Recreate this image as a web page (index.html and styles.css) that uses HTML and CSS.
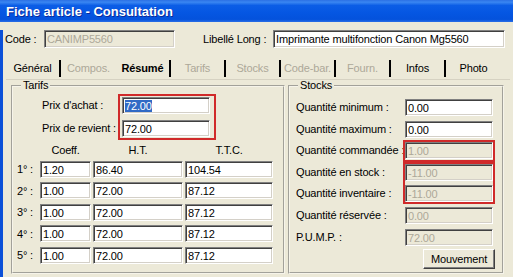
FILE: index.html
```html
<!DOCTYPE html>
<html lang="fr">
<head>
  <meta charset="UTF-8">
  <title>Fiche article - Consultation</title>
  <link rel="stylesheet" href="styles.css">
</head>
<body>
  <div class="window">
    <div class="titlebar">Fiche article - Consultation</div>

    <div class="client">
      <div class="top-row">
        <span class="code-label">Code :</span>
        <div class="field big disabled code-field">CANIMP5560</div>
        <span class="libelle-label">Libellé Long :</span>
        <div class="field big libelle-field">Imprimante multifonction Canon Mg5560</div>
      </div>

      <div class="tabs">
        <div class="tab sep">Général</div>
        <div class="tab off">Compos.</div>
        <div class="tab sep active">Résumé</div>
        <div class="tab sep off">Tarifs</div>
        <div class="tab sep off">Stocks</div>
        <div class="tab sep off">Code-bar.</div>
        <div class="tab sep off">Fourn.</div>
        <div class="tab sep">Infos</div>
        <div class="tab">Photo</div>
      </div>
      <div class="tab-line"></div>

      <div class="panels">
        <fieldset class="group tarifs">
          <legend>Tarifs</legend>
          <div class="prix">
            <div class="prix-labels">
              <span>Prix d'achat :</span>
              <span>Prix de revient :</span>
            </div>
            <div class="mark prix-mark">
              <div class="field"><span class="sel">72.00</span></div>
              <div class="field">72.00</div>
            </div>
          </div>

          <div class="niveaux">
            <span></span>
            <span class="head">Coeff.</span>
            <span class="head">H.T.</span>
            <span class="head">T.T.C.</span>

            <span class="lbl">1° :</span>
            <div class="field">1.20</div>
            <div class="field">86.40</div>
            <div class="field">104.54</div>

            <span class="lbl">2° :</span>
            <div class="field">1.00</div>
            <div class="field">72.00</div>
            <div class="field">87.12</div>

            <span class="lbl">3° :</span>
            <div class="field">1.00</div>
            <div class="field">72.00</div>
            <div class="field">87.12</div>

            <span class="lbl">4° :</span>
            <div class="field">1.00</div>
            <div class="field">72.00</div>
            <div class="field">87.12</div>

            <span class="lbl">5° :</span>
            <div class="field">1.00</div>
            <div class="field">72.00</div>
            <div class="field">87.12</div>
          </div>
        </fieldset>

        <fieldset class="group stocks">
          <legend>Stocks</legend>
          <div class="qtes">
            <div class="qte-labels">
              <span>Quantité minimum :</span>
              <span>Quantité maximum :</span>
              <span>Quantité commandée :</span>
              <span>Quantité en stock :</span>
              <span>Quantité inventaire :</span>
              <span>Quantité réservée :</span>
              <span>P.U.M.P. :</span>
            </div>
            <div class="qte-fields">
              <div class="field">0.00</div>
              <div class="field">0.00</div>
              <div class="mark stock-mark first">
                <div class="field disabled">1.00</div>
              </div>
              <div class="mark stock-mark">
                <div class="field disabled">-11.00</div>
                <div class="field disabled">-11.00</div>
              </div>
              <div class="field disabled">0.00</div>
              <div class="field disabled">72.00</div>
            </div>
          </div>
          <div class="actions">
            <button class="btn">Mouvement</button>
          </div>
        </fieldset>
      </div>
    </div>
  </div>
</body>
</html>
```

FILE: styles.css
```css
body {
  margin: 0;
  background: #ece9d8;
  font-family: "Liberation Sans", Arial, sans-serif;
  font-size: 11px;
  letter-spacing: -0.15px;
  color: #000;
}
.window {
  width: 513px;
  height: 277px;
  overflow: hidden;
}
.titlebar {
  height: 22px;
  box-sizing: border-box;
  padding-left: 6px;
  background: linear-gradient(to bottom, #2b70e4 0%, #3a86f2 10%, #0b5de6 25%, #0556e2 60%, #0452dc 88%, #2a6ee6 100%);
  color: #fff;
  font-weight: bold;
  font-size: 13px;
  letter-spacing: 0;
  line-height: 23px;
  text-shadow: 1px 1px 0 #0a2a9a;
}
.client {
  height: 255px;
  border-left: 3px solid #0b50d8;
  padding-left: 2px;
}

/* fields */
.field {
  box-sizing: border-box;
  height: 17px;
  background: #fff;
  border: 1px solid;
  border-color: #808080 #fff #fff #808080;
  box-shadow: inset 1px 1px 0 #404040, inset -1px -1px 0 #d4d0c8;
  padding: 1px 0 0 2px;
  line-height: 14px;
  white-space: nowrap;
  overflow: hidden;
}
.field.big { height: 18px; line-height: 15px; }
.field.disabled {
  background: #ece9d8;
  color: #aca899;
}
.sel {
  background: #316ac5;
  color: #fff;
}

/* top row */
.top-row {
  display: flex;
  align-items: center;
  margin-top: 8px;
  height: 18px;
  white-space: nowrap;
}
.code-label { width: 39px; }
.code-field { width: 131px; }
.libelle-label { width: 70px; margin-left: 28px; }
.libelle-field { width: 232px; }

/* tabs */
.tabs {
  display: flex;
  margin: 12px 0 0 1px;
  height: 17px;
}
.tab {
  box-sizing: border-box;
  width: 55px;
  height: 17px;
  line-height: 17px;
  text-align: center;
  white-space: nowrap;
}
.tab.sep { border-right: 2px solid #000; }
.tab.off { color: #aca899; }
.tab.active { font-weight: bold; }
.tab-line {
  height: 1px;
  margin: 2px 3px 0 1px;
  background: #d6d2c2;
}

/* group boxes */
.panels {
  display: flex;
  gap: 3px;
  margin-left: 6px;
}
.group {
  box-sizing: border-box;
  height: 194px;
  margin: 0;
  padding: 0;
  border: 2px groove #f6f4ea;
}
.group legend {
  margin-left: 8px;
  padding: 0 2px;
  line-height: 11px;
}
.tarifs { width: 274px; }
.stocks { width: 216px; }

.mark {
  display: flex;
  flex-direction: column;
  border: 2px solid #d02a2a;
}

/* tarifs */
.prix {
  display: flex;
  margin: 6px 0 0 29px;
}
.prix-labels {
  display: flex;
  flex-direction: column;
  gap: 6px;
  width: 80px;
  line-height: 17px;
  white-space: nowrap;
}
.prix-mark {
  gap: 6px;
  width: 88px;
  padding: 1px 4px 1px 2px;
  margin: -3px -6px -3px -4px;
}
.niveaux {
  display: grid;
  grid-template-columns: 21px 51px 90px 88px;
  grid-template-rows: 12px repeat(5, 17px);
  column-gap: 2px;
  row-gap: 4.5px;
  align-items: center;
  margin: 7px 0 0 4px;
}
.niveaux .head {
  text-align: center;
  line-height: 12px;
}

/* stocks */
.qtes {
  display: flex;
  margin: 8px 0 0 6px;
}
.qte-labels {
  display: flex;
  flex-direction: column;
  gap: 4.6px;
  width: 109px;
  line-height: 17px;
  white-space: nowrap;
}
.qte-fields {
  display: flex;
  flex-direction: column;
  gap: 4.6px;
  width: 88px;
}
.stock-mark {
  gap: 4.6px;
  margin: -2px -2px -2px -2px;
}
.stock-mark.first {
  padding-bottom: 1px;
  margin-bottom: -3px;
}
.actions {
  display: flex;
  justify-content: flex-end;
  margin: 3px 7px 0 0;
}

.btn {
  box-sizing: border-box;
  width: 72px;
  height: 20px;
  padding: 0;
  font-family: inherit;
  font-size: 11px;
  letter-spacing: inherit;
  color: #000;
  background: #ece9d8;
  border: 1px solid;
  border-color: #fff #404040 #404040 #fff;
  box-shadow: inset -1px -1px 0 #808080;
}
```
